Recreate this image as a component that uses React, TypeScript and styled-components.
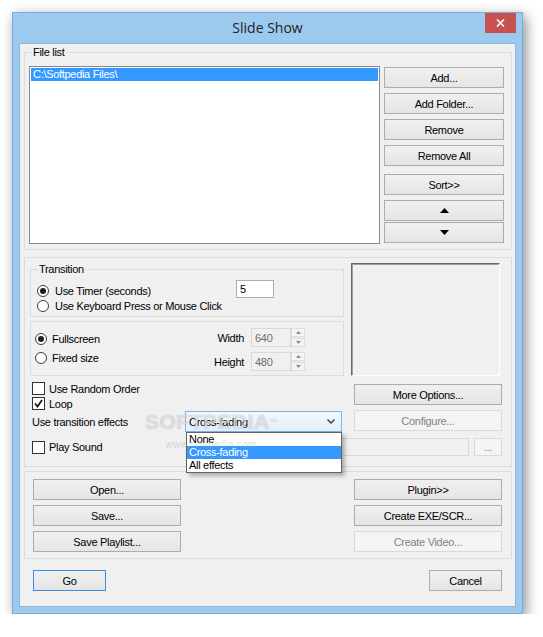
import { createGlobalStyle, styled } from "styled-components"

const GlobalStyle = createGlobalStyle`
    html, body {
        margin: 0;
        padding: 0;
        background: #ffffff;
    }
    body {
        font-family: "Liberation Sans", Arial, sans-serif;
        font-size: 11px;
        letter-spacing: -0.3px;
        color: #000;
    }
    * {
        box-sizing: border-box;
    }
`

const Window = styled.div `
    width: 511px;
    height: 602px;
    margin: 12px 0 0 12px;
    background: #9ccaef;
    border: 1px solid #78acdc;
    box-shadow: 3px 4px 12px rgba(0, 0, 0, 0.45);
    display: flex;
    flex-direction: column;
    padding: 0 6px 6px 6px;
`

const TitleBar = styled.div `
    height: 30px;
    display: grid;
    grid-template-columns: 1fr auto 1fr;
    align-items: start;
`

const Title = styled.div `
    grid-column: 2;
    font-family: "Open Sans", "Noto Sans", sans-serif;
    font-size: 14px;
    letter-spacing: 0;
    line-height: 30px;
    color: #222;
`

const CloseButton = styled.div `
    grid-column: 3;
    justify-self: end;
    width: 31px;
    height: 20px;
    background: #c75050;
    display: flex;
    align-items: center;
    justify-content: center;
`

const Client = styled.div `
    flex: 1;
    background: #f0f0f0;
    border: 1px solid #8fb6db;
    padding: 8px 3px 0 4px;
    display: flex;
    flex-direction: column;
`

const Group = styled.div `
    position: relative;
    border: 1px solid #dcdcdc;
`

const Caption = styled.span `
    position: absolute;
    top: -7px;
    left: 7px;
    padding: 0 1px;
    line-height: 13px;
    background: #f0f0f0;
`

const FileGroup = styled(Group) `
    display: flex;
    gap: 4px;
    padding: 13px 7px 5px 4px;
`

const ListBox = styled.div `
    width: 351px;
    height: 178px;
    background: #fff;
    border: 1px solid #828790;
    padding: 1px;
`

const ListItem = styled.div<{ $selected?: boolean }> `
    height: 13px;
    line-height: 13px;
    padding-left: 2px;
    white-space: nowrap;
    background: ${p => (p.$selected ? "#3399ff" : "transparent")};
    color: ${p => (p.$selected ? "#fff" : "#000")};
`

const ButtonStack = styled.div<{ $gap?: number; $top?: number }> `
    display: flex;
    flex-direction: column;
    gap: ${p => p.$gap ?? 0}px;
    padding-top: ${p => p.$top ?? 0}px;
`

const Button = styled.button<{ $w?: number; $h?: number; $mt?: number; $ml?: number; $off?: boolean; $default?: boolean }> `
    width: ${p => p.$w ?? 120}px;
    height: ${p => p.$h ?? 21}px;
    margin: ${p => p.$mt ?? 0}px 0 0 ${p => p.$ml ?? 0}px;
    padding: 0;
    font: inherit;
    letter-spacing: inherit;
    display: flex;
    align-items: center;
    justify-content: center;
    border: 1px solid ${p => (p.$default ? "#3d8ee0" : p.$off ? "#d9d9d9" : "#acacac")};
    background: ${p => (p.$off ? "#f4f4f4" : "linear-gradient(#f0f0f0, #e5e5e5)")};
    color: ${p => (p.$off ? "#838383" : "#000")};
    border-radius: 0;
`

const OptionsGroup = styled(Group) `
    margin-top: 7px;
    height: 210px;
`

const TopSection = styled.div `
    display: flex;
    align-items: flex-start;
    gap: 7px;
    padding: 5px 0 0 5px;
`

const LeftCol = styled.div `
    width: 314px;
    margin-top: 6px;
    display: flex;
    flex-direction: column;
    gap: 4px;
`

const TransitionBox = styled(Group) `
    height: 48px;
    padding: 10px 0 0 6px;
`

const TimerRow = styled.div `
    display: grid;
    grid-template-columns: 199px 38px;
    align-items: end;
    height: 18px;
`

const RadioRow = styled.label<{ $gap?: number }> `
    display: flex;
    align-items: center;
    gap: ${p => p.$gap ?? 6}px;
    height: 15px;
    white-space: nowrap;
`

const Radio = styled.span<{ $checked?: boolean }> `
    width: 12px;
    height: 12px;
    border-radius: 50%;
    border: 1px solid #3c3c3c;
    background: #fff;
    display: flex;
    align-items: center;
    justify-content: center;
    flex: none;

    &::after {
        content: "";
        width: 6px;
        height: 6px;
        border-radius: 50%;
        background: #1e1e1e;
        display: ${p => (p.$checked ? "block" : "none")};
    }
`

const TextField = styled.div<{ $w: number; $h?: number; $off?: boolean }> `
    width: ${p => p.$w}px;
    height: ${p => p.$h ?? 18}px;
    border: 1px solid ${p => (p.$off ? "#d9d9d9" : "#abadb3")};
    background: ${p => (p.$off ? "#f0f0f0" : "#fff")};
    color: ${p => (p.$off ? "#6d6d6d" : "#000")};
    padding-left: 3px;
    display: flex;
    align-items: center;
`

const SizeBox = styled(Group) `
    height: 55px;
    display: flex;
    align-items: flex-start;
    padding-left: 4px;
`

const RadioStack = styled.div `
    width: 150px;
    margin-top: 9px;
    display: flex;
    flex-direction: column;
    gap: 4px;
`

const SizeRows = styled.div `
    margin-top: 6px;
    display: flex;
    flex-direction: column;
    gap: 5px;
`

const SizeRow = styled.div `
    display: flex;
    align-items: center;
    height: 19px;
`

const SizeLabel = styled.span `
    width: 59px;
    margin-right: 7px;
    text-align: right;
`

const Spinner = styled.div `
    width: 14px;
    height: 19px;
    display: flex;
    flex-direction: column;
    gap: 1px;
`

const SpinHalf = styled.div `
    flex: 1;
    border: 1px solid #dedede;
    background: #f4f4f4;
    display: flex;
    align-items: center;
    justify-content: center;
`

const Preview = styled.div `
    width: 149px;
    height: 113px;
    border-top: 1px solid #696969;
    border-left: 1px solid #696969;
    border-right: 1px solid #fff;
    border-bottom: 1px solid #fff;
    box-shadow: inset 1px 1px 0 #a0a0a0;
`

const BottomSection = styled.div `
    padding: 5px 0 0 7px;
`

const OptionsRow = styled.div `
    display: flex;
    align-items: flex-start;
    gap: 12px;
`

const LeftStack = styled.div `
    width: 310px;
    display: flex;
    flex-direction: column;
`

const CheckRow = styled.label<{ $w?: number }> `
    display: flex;
    align-items: center;
    gap: 4px;
    height: 15px;
    white-space: nowrap;
    width: ${p => (p.$w ? `${p.$w}px` : "auto")};
`

const CheckBox = styled.span `
    width: 13px;
    height: 13px;
    border: 1px solid #333;
    background: #fff;
    display: flex;
    align-items: center;
    justify-content: center;
    flex: none;
`

const EffectsRow = styled.div `
    display: flex;
    align-items: center;
    height: 21px;
`

const EffectsLabel = styled.span `
    width: 153px;
`

const Combo = styled.div `
    position: relative;
    width: 157px;
    height: 21px;
    border: 1px solid #7eb4ea;
    background: linear-gradient(#f2f7fd, #e4effb);
    padding: 0 6px 0 3px;
    display: flex;
    align-items: center;
    justify-content: space-between;
`

const DropList = styled.div `
    position: absolute;
    top: 20px;
    left: 0;
    width: 156px;
    background: #fff;
    border: 1px solid #646464;
    box-shadow: 3px 3px 4px rgba(0, 0, 0, 0.28);
    z-index: 5;
`

const RightStack = styled.div `
    margin-top: 3px;
    display: flex;
    flex-direction: column;
    gap: 5px;
`

const PlaySoundRow = styled.div `
    margin-top: 6px;
    display: flex;
    align-items: center;
    height: 18px;
`

const Watermark = styled.div `
    position: absolute;
    top: 152px;
    left: 120px;
    pointer-events: none;
    z-index: 10;
    display: flex;
    flex-direction: column;
    align-items: center;
`

const WatermarkBig = styled.span `
    font-size: 21px;
    font-weight: bold;
    letter-spacing: 0.5px;
    color: rgba(255, 255, 255, 0.6);
    text-shadow: 0 0 1px rgba(0, 0, 0, 0.3);
    line-height: 24px;

    sup {
        font-size: 7px;
        font-weight: normal;
        vertical-align: top;
    }
`

const WatermarkSmall = styled.span `
    margin-top: 5px;
    font-size: 10px;
    color: rgba(150, 150, 150, 0.35);
    letter-spacing: 0.3px;
`

const ActionsGroup = styled(Group) `
    margin-top: 4px;
    display: flex;
    justify-content: space-between;
    padding: 7px 9px 6px 8px;
`

const FooterRow = styled.div `
    margin-top: 11px;
    padding: 0 10px 0 9px;
    display: flex;
    justify-content: space-between;
`

const Arrow = ({ down }: { down?: boolean }) => (
    <svg width="9" height="5" viewBox="0 0 9 5">
        <polygon points={down ? "0,0 9,0 4.5,5" : "0,5 9,5 4.5,0"} fill="#000" />
    </svg>
)

const SpinArrow = ({ down }: { down?: boolean }) => (
    <svg width="5" height="3" viewBox="0 0 5 3">
        <polygon points={down ? "0,0 5,0 2.5,3" : "0,3 5,3 2.5,0"} fill="#8a8a8a" />
    </svg>
)

export default function App() {
    return (
        <>
            <GlobalStyle />
            <Window>
                <TitleBar>
                    <Title>Slide Show</Title>
                    <CloseButton>
                        <svg width="9" height="8" viewBox="0 0 9 8">
                            <path d="M1 0.5 L8 7.5 M8 0.5 L1 7.5" stroke="#fff" strokeWidth="1.6" />
                        </svg>
                    </CloseButton>
                </TitleBar>
                <Client>
                    <FileGroup>
                        <Caption>File list</Caption>
                        <ListBox>
                            <ListItem $selected>C:\Softpedia Files\</ListItem>
                        </ListBox>
                        <ButtonStack $top={1}>
                            <Button>Add...</Button>
                            <Button $mt={5}>Add Folder...</Button>
                            <Button $mt={5}>Remove</Button>
                            <Button $mt={5}>Remove All</Button>
                            <Button $mt={8}>Sort&gt;&gt;</Button>
                            <Button $mt={5}><Arrow /></Button>
                            <Button $mt={1}><Arrow down /></Button>
                        </ButtonStack>
                    </FileGroup>

                    <OptionsGroup>
                        <TopSection>
                            <LeftCol>
                                <TransitionBox>
                                    <Caption>Transition</Caption>
                                    <TimerRow>
                                        <RadioRow>
                                            <Radio $checked />
                                            Use Timer (seconds)
                                        </RadioRow>
                                        <TextField $w={38}>5</TextField>
                                    </TimerRow>
                                    <RadioRow>
                                        <Radio />
                                        Use Keyboard Press or Mouse Click
                                    </RadioRow>
                                </TransitionBox>
                                <SizeBox>
                                    <RadioStack>
                                        <RadioRow $gap={5}>
                                            <Radio $checked />
                                            Fullscreen
                                        </RadioRow>
                                        <RadioRow $gap={5}>
                                            <Radio />
                                            Fixed size
                                        </RadioRow>
                                    </RadioStack>
                                    <SizeRows>
                                        <SizeRow>
                                            <SizeLabel>Width</SizeLabel>
                                            <TextField $w={40} $h={19} $off>640</TextField>
                                            <Spinner>
                                                <SpinHalf><SpinArrow /></SpinHalf>
                                                <SpinHalf><SpinArrow down /></SpinHalf>
                                            </Spinner>
                                        </SizeRow>
                                        <SizeRow>
                                            <SizeLabel>Height</SizeLabel>
                                            <TextField $w={40} $h={19} $off>480</TextField>
                                            <Spinner>
                                                <SpinHalf><SpinArrow /></SpinHalf>
                                                <SpinHalf><SpinArrow down /></SpinHalf>
                                            </Spinner>
                                        </SizeRow>
                                    </SizeRows>
                                </SizeBox>
                            </LeftCol>
                            <Preview />
                        </TopSection>

                        <BottomSection>
                            <OptionsRow>
                                <LeftStack>
                                    <CheckRow>
                                        <CheckBox />
                                        Use Random Order
                                    </CheckRow>
                                    <CheckRow>
                                        <CheckBox>
                                            <svg width="9" height="9" viewBox="0 0 9 9">
                                                <path d="M1 4.5 L3.5 7.5 L8 1" fill="none" stroke="#111" strokeWidth="1.7" />
                                            </svg>
                                        </CheckBox>
                                        Loop
                                    </CheckRow>
                                    <EffectsRow>
                                        <EffectsLabel>Use transition effects</EffectsLabel>
                                        <Combo>
                                            <span>Cross-fading</span>
                                            <svg width="8" height="5" viewBox="0 0 8 5">
                                                <path d="M0.5 0.5 L4 4 L7.5 0.5" fill="none" stroke="#444" strokeWidth="1.5" />
                                            </svg>
                                            <DropList>
                                                <ListItem>None</ListItem>
                                                <ListItem $selected>Cross-fading</ListItem>
                                                <ListItem>All effects</ListItem>
                                            </DropList>
                                        </Combo>
                                    </EffectsRow>
                                </LeftStack>
                                <RightStack>
                                    <Button $w={148}>More Options...</Button>
                                    <Button $w={148} $off disabled>Configure...</Button>
                                </RightStack>
                            </OptionsRow>
                            <PlaySoundRow>
                                <CheckRow $w={154}>
                                    <CheckBox />
                                    Play Sound
                                </CheckRow>
                                <TextField $w={283} $off />
                                <Button $w={28} $h={18} $ml={5} $off disabled>...</Button>
                            </PlaySoundRow>
                        </BottomSection>

                        <Watermark>
                            <WatermarkBig>SOFTPEDIA<sup>™</sup></WatermarkBig>
                            <WatermarkSmall>www.softpedia.com</WatermarkSmall>
                        </Watermark>
                    </OptionsGroup>

                    <ActionsGroup>
                        <ButtonStack $gap={5}>
                            <Button $w={148}>Open...</Button>
                            <Button $w={148}>Save...</Button>
                            <Button $w={148}>Save Playlist...</Button>
                        </ButtonStack>
                        <ButtonStack $gap={5}>
                            <Button $w={148}>Plugin&gt;&gt;</Button>
                            <Button $w={148}>Create EXE/SCR...</Button>
                            <Button $w={148} $off disabled>Create Video...</Button>
                        </ButtonStack>
                    </ActionsGroup>

                    <FooterRow>
                        <Button $w={73} $default>Go</Button>
                        <Button $w={73}>Cancel</Button>
                    </FooterRow>
                </Client>
            </Window>
        </>
    )
}
